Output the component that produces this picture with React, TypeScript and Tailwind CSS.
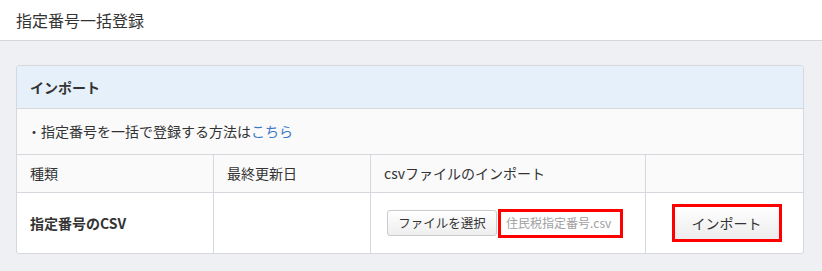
export default function App() {
  return (
    <div
      className="h-[271px] w-[822px] bg-[#eff0f4] text-[#333]"
      style={{ fontFamily: '"Noto Sans CJK JP", "Noto Sans", sans-serif' }}
    >
      <div className="flex h-[41px] items-center border-b border-[#d4d6db] bg-white px-[16px] text-[16px]">
        指定番号一括登録
      </div>
      <div className="px-[16px] pt-[24px]">
        <div className="w-[788px] overflow-hidden rounded-[3px] border border-[#d6d8dd] bg-white text-[14px]">
          <div className="flex h-[43px] items-center border-b border-[#d6d8dd] bg-[#e6f0fa] px-[13px] font-bold">
            インポート
          </div>
          <div className="flex h-[46px] items-center border-b border-[#d6d8dd] bg-[#fafafa] px-[10px]">
            ・指定番号を一括で登録する方法は<span className="text-[#3c78c8]">こちら</span>
          </div>
          <div className="grid grid-cols-[197px_157px_275px_1fr]">
            <div className="flex h-[38px] items-center border-b border-r border-[#d6d8dd] bg-[#fafafa] px-[13px]">種類</div>
            <div className="flex h-[38px] items-center border-b border-r border-[#d6d8dd] bg-[#fafafa] px-[13px]">最終更新日</div>
            <div className="flex h-[38px] items-center border-b border-r border-[#d6d8dd] bg-[#fafafa] px-[13px]">csvファイルのインポート</div>
            <div className="h-[38px] border-b border-[#d6d8dd] bg-[#fafafa]"></div>
            <div className="flex h-[60px] items-center border-r border-[#d6d8dd] px-[13px] font-bold">指定番号のCSV</div>
            <div className="h-[60px] border-r border-[#d6d8dd]"></div>
            <div className="flex h-[60px] items-center border-r border-[#d6d8dd] pl-[16px]">
              <div className="flex h-[26px] w-[110px] items-center justify-center whitespace-nowrap rounded-[3px] border border-[#c8cacf] bg-gradient-to-b from-white to-[#eeeeee] text-[12.5px]">
                ファイルを選択
              </div>
              <div className="ml-[1px] flex h-[29px] w-[125px] items-center whitespace-nowrap border-[3px] border-[#ff0000] pl-[5px] text-[12px] text-[#a0a0a0]">
                住民税指定番号.csv
              </div>
            </div>
            <div className="flex h-[60px] items-center justify-center pl-[4px]">
              <div className="flex h-[38px] w-[110px] items-center justify-center border-[3px] border-[#ff0000]">
                <div className="flex h-full w-full items-center justify-center bg-gradient-to-b from-white to-[#ececec] text-[14px]">
                  インポート
                </div>
              </div>
            </div>
          </div>
        </div>
      </div>
    </div>
  );
}
